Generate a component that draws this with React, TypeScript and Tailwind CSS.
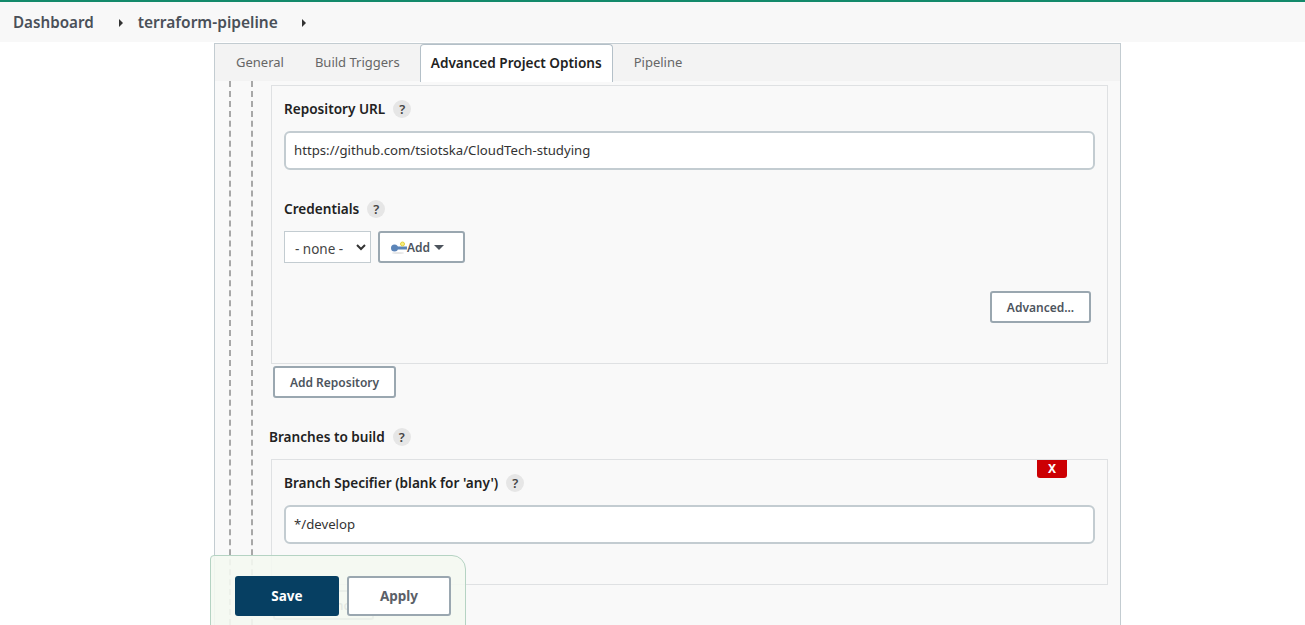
const FONT = "font-['Noto_Sans','Open_Sans',sans-serif]";

function Help() {
  return (
    <span className="ml-2 flex h-[18px] w-[18px] items-center justify-center rounded-full bg-[#e6e6e6] text-[13px] font-semibold leading-none text-[#444]">
      ?
    </span>
  );
}

function Label({ children }: { children: React.ReactNode }) {
  return (
    <div className="flex h-[20px] items-center text-[13.6px] font-semibold text-[#222]">
      {children}
      <Help />
    </div>
  );
}

function TextBox({ value }: { value: string }) {
  return (
    <div className="flex h-[39px] w-[811px] items-center rounded-md border-2 border-[#c3ccd1] bg-white pl-2 pt-px text-[13.2px] text-[#333]">
      {value}
    </div>
  );
}

function OutlineButton({ children, className }: { children: React.ReactNode; className: string }) {
  return (
    <button className={`flex items-center justify-center rounded-[3px] border-2 border-[#9aa7b0] bg-white pt-px text-[12px] font-semibold text-[#4d545d] ${className}`}>
      {children}
    </button>
  );
}

function KeyIcon() {
  return (
    <svg width="16" height="13" viewBox="0 0 16 13" className="-mt-px">
      <ellipse cx="7" cy="12" rx="6" ry="1" fill="#e6e6e6" />
      <circle cx="3.5" cy="7" r="3.5" fill="#5b84b8" />
      <rect x="5" y="5.5" width="11" height="3" fill="#5b84b8" />
      <circle cx="11.5" cy="3" r="2" fill="#f7ee80" stroke="#e3cf3c" strokeWidth="1" />
    </svg>
  );
}

function Tab({ label, active }: { label: string; active?: boolean }) {
  if (active) {
    return (
      <div className="-mb-px -ml-px flex h-[38px] w-[193px] items-center justify-center rounded-t-[4px] border border-b-0 border-[#b4c0c8] bg-white text-[13.6px] font-semibold text-[#222]">
        {label}
      </div>
    );
  }
  return <div className="px-[21px] text-[13px] text-[#666]">{label}</div>;
}

export default function App() {
  return (
    <div className={`relative h-[625px] w-[1305px] overflow-hidden bg-white ${FONT}`}>
      <header className="flex h-[42px] items-center border-t-2 border-[#138a6b] bg-[#f8f8f8] pl-[13px] pt-px text-[15.5px] font-semibold text-[#4a5058]">
        <span className="text-[15.2px]">Dashboard</span>
        <span className="ml-[25px] h-0 w-0 border-y-[4px] border-l-[4px] border-y-transparent border-l-[#333]" />
        <span className="ml-[15px]">terraform-pipeline</span>
        <span className="ml-[24px] h-0 w-0 border-y-[4px] border-l-[4px] border-y-transparent border-l-[#333]" />
      </header>

      <main className="ml-[214px] mt-px w-[907px] border border-b-0 border-[#c3ccd1]">
        <nav className="flex h-[37px] items-center bg-[#f3f3f3]">
          <Tab label="General" />
          <div className="-ml-[11px]">
            <Tab label="Build Triggers" />
          </div>
          <Tab label="Advanced Project Options" active />
          <Tab label="Pipeline" />
        </nav>

        <div className="h-[544px] bg-[#f9f9f9] pl-[14px]">
          <div className="h-full border-l-2 border-dashed border-[#a8a8a8] pl-[20px]">
            <div className="h-full border-l-2 border-dashed border-[#a8a8a8] pl-[18px] pt-[4px]">
              <section className="h-[279px] w-[837px] border border-[#dfe1e3] pl-[12px] pt-[13px]">
                <Label>Repository URL</Label>
                <div className="mt-[12px]">
                  <TextBox value="https://github.com/tsiotska/CloudTech-studying" />
                </div>
                <div className="mt-[29px]">
                  <Label>Credentials</Label>
                </div>
                <div className="mt-[12px] flex gap-[7px]">
                  <div className="flex h-[32px] w-[87px] items-center justify-between border border-[#c3ccd1] bg-white pl-[10px] pr-[3px] pt-[5px] text-[13.5px] text-[#444]">
                    - none -
                    <svg width="12" height="12" viewBox="0 0 12 12" className="-mt-[5px]" fill="none" stroke="#333" strokeWidth="2">
                      <path d="M2 4l4 4 4-4" />
                    </svg>
                  </div>
                  <OutlineButton className="h-[32px] w-[87px] pr-[8px]">
                    <KeyIcon />
                    Add
                    <span className="ml-[4px] h-0 w-0 border-x-[5px] border-t-[5px] border-x-transparent border-t-[#4d545d]" />
                  </OutlineButton>
                </div>
                <div className="mt-[28px] flex w-[807px] justify-end">
                  <OutlineButton className="h-[32px] w-[101px]">Advanced...</OutlineButton>
                </div>
              </section>

              <OutlineButton className="ml-[2px] mt-[2px] h-[32px] w-[123px]">Add Repository</OutlineButton>

              <div className="-ml-[2px] mt-[29px]">
                <Label>Branches to build</Label>
              </div>

              <section className="relative mt-[12px] h-[126px] w-[837px] border border-[#dfe1e3] pl-[12px] pt-[13px]">
                <button className="absolute right-[40px] top-0 flex h-[18px] w-[30px] items-center justify-center rounded-b-[3px] bg-[#cc0003] text-[12px] font-bold text-white">
                  X
                </button>
                <Label>Branch Specifier (blank for 'any')</Label>
                <div className="mt-[12px]">
                  <TextBox value="*/develop" />
                </div>
              </section>

              <OutlineButton className="ml-[2px] mt-[5px] h-[30px] w-[101px]">Add Branch</OutlineButton>
            </div>
          </div>
        </div>
      </main>

      <footer className="absolute left-[210px] top-[555px] flex h-[80px] w-[256px] gap-2 rounded-tl-[4px] rounded-tr-[14px] border border-[#b5d3c3] bg-[#f4f8f1]/90 pl-[24px] pt-[20px]">
        <button className="flex h-[40px] w-[104px] items-center justify-center rounded-[3px] bg-[#063f62] text-[13.5px] font-bold text-white">
          Save
        </button>
        <button className="flex h-[40px] w-[104px] items-center justify-center rounded-[3px] border-2 border-[#9aa7b0] bg-white text-[13.5px] font-bold text-[#5b6068]">
          Apply
        </button>
      </footer>
    </div>
  );
}
